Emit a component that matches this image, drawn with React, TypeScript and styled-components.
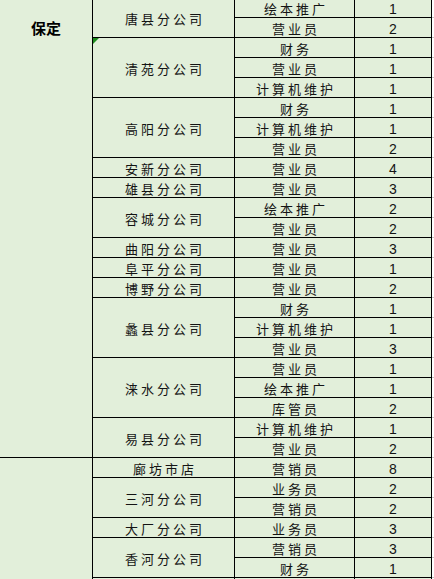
import React from "react";
import styled, { createGlobalStyle } from "styled-components";

type Job = [string, number | ""];
type Company = { name: string; jobs: Job[]; mark?: boolean };
type Region = { name: string; companies: Company[] };

const regions: Region[] = [
  {
    name: "保定",
    companies: [
      { name: "唐县分公司", jobs: [["绘本推广", 1], ["营业员", 2]] },
      { name: "清苑分公司", mark: true, jobs: [["财务", 1], ["营业员", 1], ["计算机维护", 1]] },
      { name: "高阳分公司", jobs: [["财务", 1], ["计算机维护", 1], ["营业员", 2]] },
      { name: "安新分公司", jobs: [["营业员", 4]] },
      { name: "雄县分公司", jobs: [["营业员", 3]] },
      { name: "容城分公司", jobs: [["绘本推广", 2], ["营业员", 2]] },
      { name: "曲阳分公司", jobs: [["营业员", 3]] },
      { name: "阜平分公司", jobs: [["营业员", 1]] },
      { name: "博野分公司", jobs: [["营业员", 2]] },
      { name: "蠡县分公司", jobs: [["财务", 1], ["计算机维护", 1], ["营业员", 3]] },
      { name: "涞水分公司", jobs: [["营业员", 1], ["绘本推广", 1], ["库管员", 2]] },
      { name: "易县分公司", jobs: [["计算机维护", 1], ["营业员", 2]] },
    ],
  },
  {
    name: "",
    companies: [
      { name: "廊坊市店", jobs: [["营销员", 8]] },
      { name: "三河分公司", jobs: [["业务员", 2], ["营销员", 2]] },
      { name: "大厂分公司", jobs: [["业务员", 3]] },
      { name: "香河分公司", jobs: [["营销员", 3], ["财务", 1]] },
      { name: "", jobs: [["", ""], ["", ""]] },
    ],
  },
];

const App = () => {
  return (
    <>
      <GlobalStyle />
      <Sheet>
        {regions.map((region, ri) => {
          const span = region.companies.reduce((n, c) => n + c.jobs.length, 0);
          return (
            <React.Fragment key={ri}>
              <RegionCell $span={span}>
                <RegionLabel>{region.name}</RegionLabel>
              </RegionCell>
              {region.companies.map((company, ci) => (
                <React.Fragment key={ci}>
                  <CompanyCell $span={company.jobs.length}>
                    {company.mark && <Marker />}
                    <Spaced>{company.name}</Spaced>
                  </CompanyCell>
                  {company.jobs.map(([job, count], ji) => (
                    <React.Fragment key={ji}>
                      <JobCell>
                        <Spaced>{job}</Spaced>
                      </JobCell>
                      <CountCell>{count}</CountCell>
                      <EdgeCell />
                    </React.Fragment>
                  ))}
                </React.Fragment>
              ))}
            </React.Fragment>
          );
        })}
      </Sheet>
    </>
  );
};

export default App;

const GlobalStyle = createGlobalStyle`
html, body {
  margin: 0;
  padding: 0;
  overflow: hidden;
  background: #ffffff;
}
`;

const Sheet = styled.div`
display: grid;
grid-template-columns: 93px 142px 120px 77px 1fr;
grid-auto-rows: 20px;
margin-top: -2px;
width: 434px;
font-family: "Noto Sans CJK SC", "Liberation Sans", sans-serif;
color: #141414;
`;

const Cell = styled.div`
box-sizing: border-box;
background: #e2efda;
border-right: 1px solid #000;
border-bottom: 1px solid #000;
display: flex;
align-items: center;
justify-content: center;
position: relative;
min-width: 0;
padding-top: 2px;
`;

const RegionCell = styled(Cell)<{ $span: number }>`
grid-column: 1;
grid-row: span ${(p) => p.$span};
align-items: flex-start;
padding-top: 20px;
`;

const RegionLabel = styled.div`
font-size: 15px;
font-weight: 700;
line-height: 20px;
color: #000;
`;

const CompanyCell = styled(Cell)<{ $span: number }>`
grid-column: 2;
grid-row: span ${(p) => p.$span};
`;

const JobCell = styled(Cell)`
grid-column: 3;
padding-top: 3px;
`;

const CountCell = styled(Cell)`
grid-column: 4;
font-family: "Liberation Sans", Arial, sans-serif;
font-size: 14px;
padding-top: 3px;
`;

const EdgeCell = styled.div`
grid-column: 5;
box-sizing: border-box;
background: #ffffff;
border-bottom: 1px solid #c8c8c8;
`;

const Spaced = styled.span`
font-size: 13px;
letter-spacing: 3px;
padding-left: 3px;
white-space: nowrap;
line-height: 18px;
`;

const Marker = styled.span`
position: absolute;
top: 0;
left: 0;
width: 0;
height: 0;
border-top: 6px solid #1e8c1e;
border-right: 6px solid transparent;
`;
